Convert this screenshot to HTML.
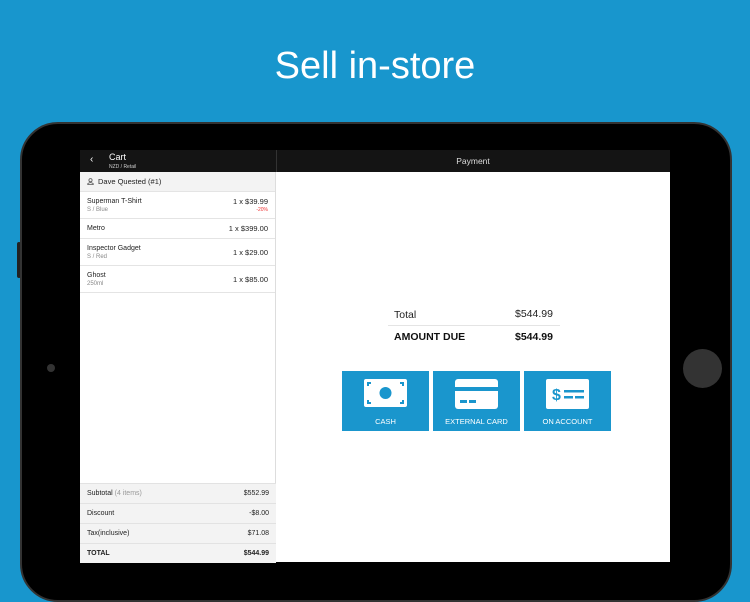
<!DOCTYPE html><html><head><style>
*{margin:0;padding:0;box-sizing:border-box}
body{width:750px;height:562px;overflow:hidden;background:#1896cd;font-family:"Liberation Sans","DejaVu Sans",sans-serif;position:relative}
.t{position:absolute;top:45px;left:0;width:750px;text-align:center;color:#fff;font-size:38px}
.dev{position:absolute;left:20px;top:122px;width:712px;height:480px;background:#000;border:2px solid #333;border-radius:38px}
.btn{position:absolute;left:17px;top:242px;width:4px;height:36px;background:#222;border-radius:2px}
.cam{position:absolute;left:47px;top:364px;width:8px;height:8px;border-radius:50%;background:#333}
.home{position:absolute;left:683px;top:349px;width:39px;height:39px;border-radius:50%;background:#333}
.scr{position:absolute;left:80px;top:150px;width:590px;height:412px;background:#fff}
.hd{position:absolute;left:0;top:0;width:590px;height:22px;background:#141414;color:#fff}
.lp{position:absolute;left:0;top:22px;width:196px;height:390px;border-right:1px solid #ddd}
.row{height:27px;border-bottom:1px solid #e4e4e4;display:flex;justify-content:space-between;align-items:center;padding:0 7px;font-size:7px;color:#222}
.sub{color:#888;font-size:6px;margin-top:2px}
.f{position:absolute;left:0;width:196px;height:20px;background:#f3f3f3;border-top:1px solid #e2e2e2;display:flex;justify-content:space-between;align-items:center;padding:0 7px;font-size:7px;color:#222}
.pb{position:absolute;top:221px;width:87px;height:60px;background:#1a96cd;color:#fff;font-size:7.5px;text-align:center}
.pb svg{position:absolute;left:22px;top:8px}
.pb span{position:absolute;left:0;right:0;top:45px}
</style></head><body>
<div class="t">Sell in-store</div>
<div class="btn"></div>
<div class="dev"></div>
<div class="cam"></div>
<div class="home"></div>
<div class="scr">
 <div class="hd">
  <div style="position:absolute;left:10px;top:4px;font-size:10px">‹</div>
  <div style="position:absolute;left:29px;top:2px;font-size:9px">Cart</div>
  <div style="position:absolute;left:29px;top:14px;font-size:5px;color:#ccc">NZD / Retail</div>
  <div style="position:absolute;left:196px;top:0;width:1px;height:22px;background:#333"></div>
  <div style="position:absolute;left:196px;width:394px;top:6px;text-align:center;font-size:8.5px;color:#ddd">Payment</div>
 </div>
 <div class="lp">
  <div class="row" style="height:20px;background:#f3f3f3;justify-content:flex-start;font-size:7.5px"><svg width="7" height="7" viewBox="0 0 7 7" style="margin-right:4px"><circle cx="3.5" cy="2.2" r="1.6" fill="none" stroke="#555" stroke-width=".8"/><path d="M.8 6.6V5.6Q3.5 3.6 6.2 5.6V6.6Z" fill="none" stroke="#555" stroke-width=".8"/></svg>Dave Quested (#1)</div>
  <div class="row"><div>Superman T-Shirt<div class="sub">S / Blue</div></div><div style="text-align:right;font-size:7.5px">1 x $39.99<div style="color:#e33;font-size:5px;margin-top:1px">-20%</div></div></div>
  <div class="row" style="height:20px"><div>Metro</div><div style="font-size:7.5px">1 x $399.00</div></div>
  <div class="row"><div>Inspector Gadget<div class="sub">S / Red</div></div><div style="font-size:7.5px">1 x $29.00</div></div>
  <div class="row"><div>Ghost<div class="sub">250ml</div></div><div style="font-size:7.5px">1 x $85.00</div></div>
  <div class="f" style="top:311px"><div>Subtotal <span style="color:#999">(4 items)</span></div><div>$552.99</div></div>
  <div class="f" style="top:331px"><div>Discount</div><div>-$8.00</div></div>
  <div class="f" style="top:351px"><div>Tax(inclusive)</div><div>$71.08</div></div>
  <div class="f" style="top:371px;font-weight:bold"><div>TOTAL</div><div>$544.99</div></div>
 </div>
 <div style="position:absolute;left:314px;top:159px;font-size:10.5px;color:#222">Total</div>
 <div style="position:absolute;left:435px;top:158px;font-size:10.5px;color:#222">$544.99</div>
 <div style="position:absolute;left:308px;top:175px;width:172px;height:1px;background:#e4e4e4"></div>
 <div style="position:absolute;left:314px;top:181px;font-size:10.5px;font-weight:bold;color:#111">AMOUNT DUE</div>
 <div style="position:absolute;left:435px;top:181px;font-size:10.5px;font-weight:bold;color:#111">$544.99</div>
 <div class="pb" style="left:262px"><svg width="43" height="28" viewBox="0 0 43 28"><rect width="43" height="28" rx="2" fill="#fff"/><circle cx="21.5" cy="14" r="6" fill="#1a96cd"/><path d="M3 3h4v2H5v2H3zM40 3h-4v2h2v2h2zM3 25h4v-2H5v-2H3zM40 25h-4v-2h2v-2h2z" fill="#1a96cd"/></svg><span style="top:46px">CASH</span></div>
 <div class="pb" style="left:353px"><svg width="43" height="30" viewBox="0 0 43 30"><rect width="43" height="30" rx="3" fill="#fff"/><rect y="8" width="43" height="4" fill="#1a96cd"/><rect x="5" y="21" width="7" height="3" fill="#1a96cd"/><rect x="14" y="21" width="7" height="3" fill="#1a96cd"/></svg><span style="top:46px">EXTERNAL CARD</span></div>
 <div class="pb" style="left:444px"><svg width="43" height="30" viewBox="0 0 43 30"><rect width="43" height="30" rx="2" fill="#fff"/><text x="6" y="21" font-size="16" font-weight="bold" fill="#1a96cd" font-family="Liberation Sans">$</text><rect x="18" y="11" width="20" height="2.5" fill="#1a96cd"/><rect x="18" y="17" width="9" height="2.5" fill="#1a96cd"/><rect x="29" y="17" width="9" height="2.5" fill="#1a96cd"/></svg><span style="top:46px">ON ACCOUNT</span></div>
</div>
</body></html>
